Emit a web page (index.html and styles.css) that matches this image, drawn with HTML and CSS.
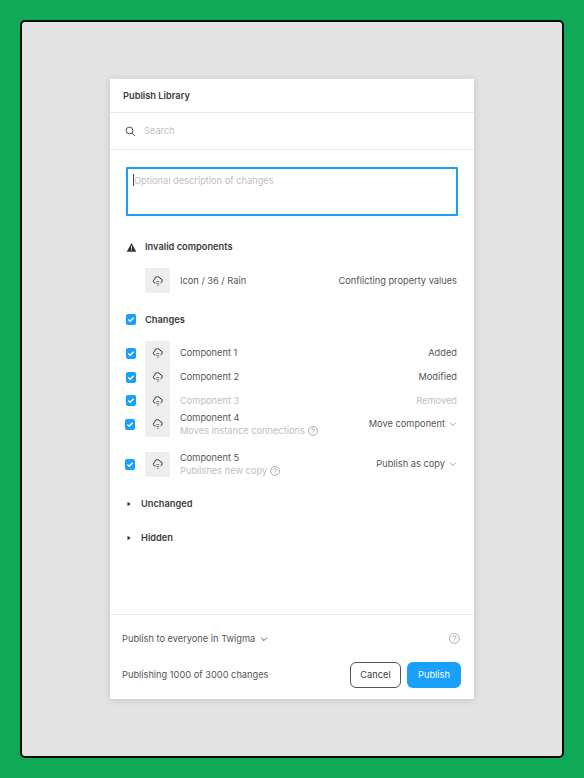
FILE: index.html
```html
<!DOCTYPE html>
<html lang="en">
<head>
<meta charset="utf-8">
<title>Publish Library</title>
<link rel="stylesheet" href="styles.css">
</head>
<body>
<svg class="defs" width="0" height="0" aria-hidden="true">
  <symbol id="rain" viewBox="0 0 12 12">
    <path d="M3.5 8H3.1A1.9 1.9 0 0 1 2.7 4.3 2.7 2.7 0 0 1 5.4 1.6 2.7 2.7 0 0 1 8 3.4 2.3 2.3 0 0 1 10.2 5.6 2.3 2.3 0 0 1 8.6 7.9" fill="none" stroke="currentColor" stroke-width="1"/>
    <path d="M5 6v1M6.7 6.2v1M5 8v1M6.7 8.4v1M5.8 9.8v1" fill="none" stroke="currentColor" stroke-width=".9"/>
  </symbol>
  <symbol id="check" viewBox="0 0 11 11">
    <path d="M2.6 5.6 4.6 7.5 8.4 3.5" fill="none" stroke="#fff" stroke-width="1.6"/>
  </symbol>
  <symbol id="help" viewBox="0 0 11 11">
    <circle cx="5.5" cy="5.5" r="4.9" fill="none" stroke="currentColor" stroke-width=".8"/>
    <path d="M4 4.4A1.5 1.5 0 1 1 6.2 5.7C5.7 6 5.5 6.2 5.5 6.9M5.5 7.6v.9" fill="none" stroke="currentColor" stroke-width=".8"/>
  </symbol>
  <symbol id="chev" viewBox="0 0 8 8">
    <path d="M1.2 2.8 4 5.6 6.8 2.8" fill="none" stroke="currentColor" stroke-width=".9"/>
  </symbol>
  <symbol id="tri" viewBox="0 0 6 6">
    <path d="M1.5 .8 4.8 3 1.5 5.2Z" fill="currentColor"/>
  </symbol>
</svg>
<div class="frame">
  <main class="dialog">
    <header class="title">Publish Library</header>
    <div class="search">
      <svg class="search-icon" viewBox="0 0 12 12" aria-hidden="true"><circle cx="4.9" cy="4.9" r="3.7" fill="none" stroke="currentColor" stroke-width="1"/><path d="M7.6 7.6 11 11" fill="none" stroke="currentColor" stroke-width="1"/></svg>
      <span class="muted">Search</span>
    </div>
    <div class="body">
      <div class="description"><span class="caret"></span><span class="muted">Optional description of changes</span></div>

      <div class="section-head invalid-head">
        <svg class="warn" viewBox="0 0 12 12" aria-hidden="true"><path d="M6 1.2 11.2 10.6H.8Z" fill="#333"/><path d="M6 4.4V7.4M6 8.2V9.2" stroke="#fff" stroke-width="1"/></svg>
        <strong>Invalid components</strong>
      </div>
      <div class="row invalid-row">
        <span class="thumb"><svg class="rain"><use href="#rain"/></svg></span>
        <span class="name">Icon / 36 / Rain</span>
        <span class="status">Conflicting property values</span>
      </div>

      <div class="section-head changes-head">
        <svg class="box"><use href="#check"/></svg>
        <strong>Changes</strong>
      </div>

      <div class="list">
        <div class="row r24">
          <svg class="box"><use href="#check"/></svg>
          <span class="thumb"><svg class="rain"><use href="#rain"/></svg></span>
          <span class="name">Component 1</span>
          <span class="status">Added</span>
        </div>
        <div class="row r24">
          <svg class="box"><use href="#check"/></svg>
          <span class="thumb"><svg class="rain"><use href="#rain"/></svg></span>
          <span class="name">Component 2</span>
          <span class="status">Modified</span>
        </div>
        <div class="row r23">
          <svg class="box"><use href="#check"/></svg>
          <span class="thumb"><svg class="rain"><use href="#rain"/></svg></span>
          <span class="name muted">Component 3</span>
          <span class="status muted">Removed</span>
        </div>
        <div class="row r26 r-fourth">
          <svg class="box shifted"><use href="#check"/></svg>
          <span class="thumb"><svg class="rain"><use href="#rain"/></svg></span>
          <span class="name stack">Component 4<small class="muted sub">Moves instance connections <svg class="help"><use href="#help"/></svg></small></span>
          <span class="status select">Move component <svg class="chev"><use href="#chev"/></svg></span>
        </div>
        <div class="row r26 r-fifth">
          <svg class="box shifted"><use href="#check"/></svg>
          <span class="thumb"><svg class="rain"><use href="#rain"/></svg></span>
          <span class="name stack">Component 5<small class="muted sub">Publishes new copy <svg class="help"><use href="#help"/></svg></small></span>
          <span class="status select">Publish as copy <svg class="chev"><use href="#chev"/></svg></span>
        </div>
      </div>

      <div class="collapsed first"><svg class="tri"><use href="#tri"/></svg><strong>Unchanged</strong></div>
      <div class="collapsed second"><svg class="tri"><use href="#tri"/></svg><strong>Hidden</strong></div>
    </div>
    <footer class="footer">
      <div class="foot-top">
        <span class="audience">Publish to everyone in Twigma <svg class="chev dark"><use href="#chev"/></svg></span>
        <svg class="help foot-help"><use href="#help"/></svg>
      </div>
      <div class="foot-bottom">
        <span class="count">Publishing 1000 of 3000 changes</span>
        <button class="btn cancel" type="button">Cancel</button>
        <button class="btn publish" type="button">Publish</button>
      </div>
    </footer>
  </main>
</div>
</body>
</html>
```
FILE: styles.css
```css
* { box-sizing: border-box; }
html, body { margin: 0; height: 100%; }
body {
  width: 584px;
  height: 778px;
  padding: 20px;
  background: #10a957;
  font-family: Inter, "Liberation Sans", sans-serif;
  font-size: 9.25px;
  line-height: 12px;
  color: #555;
  overflow: hidden;
}
.defs { position: absolute; }
.frame {
  height: 738px;
  border: 2px solid #0b0b0b;
  border-radius: 5px;
  background: #e4e4e4;
  padding: 57px 88px 57px 88px;
}
.dialog {
  width: 364px;
  height: 620px;
  background: #fff;
  box-shadow: 0 1px 8px rgba(0, 0, 0, .14);
  display: flex;
  flex-direction: column;
}
strong { font-weight: 600; color: #3c3c3c; }
.muted { color: #c0c0c0; }
.title {
  height: 34px;
  padding: 0 13px;
  display: flex;
  align-items: center;
  font-weight: 600;
  color: #3c3c3c;
  border-bottom: 1px solid #e9e9e9;
}
.search {
  height: 37px;
  padding: 0 15px;
  display: flex;
  align-items: center;
  gap: 8px;
  border-bottom: 1px solid #e9e9e9;
}
.search-icon { width: 11px; height: 11px; color: #444; }
.body {
  flex: 1;
  padding: 17px 16px 0;
}
.description {
  height: 49px;
  border: 2px solid #18a0fb;
  padding: 5px;
  display: flex;
  align-items: flex-start;
  border-radius: 1px;
}
.caret { width: 1px; height: 12px; background: #444; flex: none; }
.description .muted { margin-top: 1px; }
.section-head { display: flex; align-items: center; }
.invalid-head { margin-top: 25px; height: 12px; gap: 8px; }
.warn { width: 11px; height: 11px; flex: none; }
.invalid-row { margin-top: 15px; height: 25px; padding-left: 19px; }
.changes-head { margin-top: 21px; height: 12px; gap: 9px; }
.changes-head .box { margin-top: -1px; }
.box {
  width: 10px;
  height: 11px;
  flex: none;
  background: #18a0fb;
  border-radius: 2px;
}
.list { margin-top: 15px; }
.row { display: flex; align-items: center; }
.r24 { height: 24px; }
.r23 { height: 23px; }
.r26 { height: 26px; }
.r-fourth { margin-top: -1px; }
.r-fifth { margin-top: 14px; }
.list .box { margin-right: 9px; }
.list .box.shifted { margin-left: -1px; margin-right: 10px; }
.thumb {
  width: 25px;
  height: 25px;
  flex: none;
  background: #eeeeee;
  border-radius: 1px;
  display: flex;
  align-items: center;
  justify-content: center;
  color: #333;
}
.rain { width: 12px; height: 12px; }
.name { margin-left: 10px; }
.stack { display: flex; flex-direction: column; line-height: 13px; }
.sub { font-size: 9.25px; display: flex; align-items: center; gap: 3px; line-height: 13px; }
.help { width: 10px; height: 10px; color: #8e8e8e; }
.status { margin-left: auto; margin-right: 1px; }
.select { display: flex; align-items: center; gap: 4px; margin-top: -1px; }
.chev { width: 8px; height: 8px; color: #9a9a9a; }
.chev.dark { color: #444; margin-left: 5px; }
.collapsed { display: flex; align-items: center; gap: 9px; height: 12px; }
.collapsed.first { margin-top: 21px; }
.collapsed.second { margin-top: 22px; }
.tri { width: 6px; height: 6px; color: #333; flex: none; }
.footer {
  height: 85px;
  border-top: 1px solid #e9e9e9;
  padding: 0 13px 11px 12px;
}
.foot-top {
  height: 47px;
  display: flex;
  align-items: center;
  justify-content: space-between;
  padding-right: 1px;
}
.audience { display: flex; align-items: center; }
.foot-help { width: 11px; height: 11px; color: #9a9a9a; }
.foot-bottom { display: flex; align-items: center; gap: 6px; }
.count { margin-right: auto; }
.btn {
  height: 26px;
  border-radius: 6px;
  font: 400 9.25px/12px Inter, "Liberation Sans", sans-serif;
  padding: 0;
}
.cancel { width: 51px; background: #fff; border: 1px solid #555; color: #3c3c3c; }
.publish { width: 54px; background: #18a0fb; border: 0; color: #fff; }
```
